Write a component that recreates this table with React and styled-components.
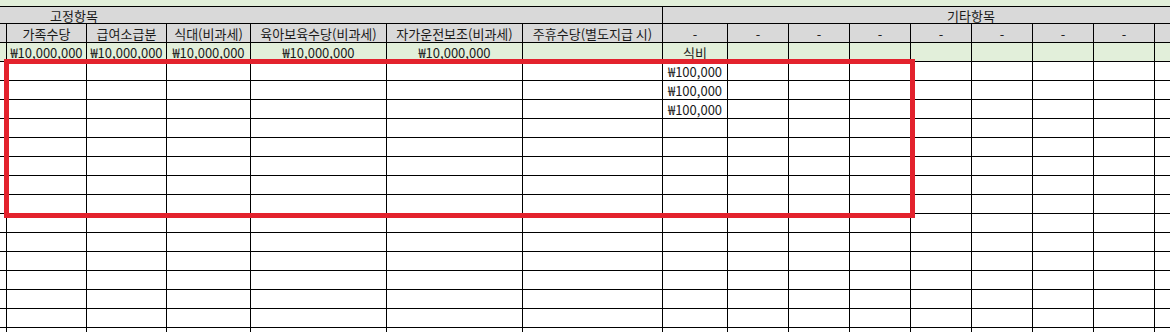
import React from 'react'
import styled, { createGlobalStyle } from 'styled-components'

const GlobalStyle = createGlobalStyle`
  html, body {
    margin: 0;
    padding: 0;
    background: #fff;
  }

  body {
    font-family: "Noto Sans CJK KR", "Noto Sans", sans-serif;
    font-size: 13px;
    color: #1a1a1a;
  }
`

const GRAY = '#d9d9d9'
const GREEN = '#e2efda'

const Sheet = styled.div`
  position: relative;
  width: 1170px;
  height: 332px;
  overflow: hidden;
`

const Grid = styled.div`
  display: grid;
  grid-template-columns: 7px 80px 80px 84px 136px 136px 140px 65px repeat(7, 61px) 1fr;
  grid-template-rows: 7px 17px 19px 19px;
  grid-auto-rows: 19px;
`

const Cell = styled.div`
  box-sizing: border-box;
  display: flex;
  align-items: center;
  justify-content: ${p => (p.$align === 'left' ? 'flex-start' : 'center')};
  padding-left: ${p => p.$indent || 0}px;
  grid-column: ${p => p.$span || 'auto'};
  background: ${p => p.$bg || '#fff'};
  border-bottom: 1px solid #000;
  border-right: ${p => (p.$open ? 'none' : '1px solid #000')};
  white-space: nowrap;
  overflow: visible;
  line-height: 1;
`

const Highlight = styled.div`
  position: absolute;
  left: 4px;
  top: 59px;
  width: 911px;
  height: 159px;
  box-sizing: border-box;
  border: 5px solid #e3222d;
  pointer-events: none;
`

const COLS = 16

const titles = [
  '',
  '가족수당',
  '급여소급분',
  '식대(비과세)',
  '육아보육수당(비과세)',
  '자가운전보조(비과세)',
  '주휴수당(별도지급 시)',
  '-', '-', '-', '-', '-', '-', '-', '-',
  ''
]

const amounts = [
  '',
  '₩10,000,000',
  '₩10,000,000',
  '₩10,000,000',
  '₩10,000,000',
  '₩10,000,000',
  '',
  '식비',
  '', '', '', '', '', '', '', ''
]

const rows = Array.from({ length: 15 }, (_, i) => {
  const cells = Array(COLS).fill('')
  if (i < 3) cells[7] = '₩100,000'
  return cells
})

const Row = ({ cells, bg }) => (
  <>
    {cells.map((text, i) => (
      <Cell key={i} $bg={bg} $open={i === COLS - 1}>
        {text}
      </Cell>
    ))}
  </>
)

export default function App () {
  return (
    <Sheet>
      <GlobalStyle />
      <Grid>
        <Cell $span='1 / -1' $bg={GREEN} $open />

        <Cell $span='1 / 8' $bg={GRAY} $align='left' $indent={50}>고정항목</Cell>
        <Cell $span='8 / -1' $bg={GRAY} $align='left' $indent={284} $open>기타항목</Cell>

        <Row cells={titles} bg={GRAY} />
        <Row cells={amounts} bg={GREEN} />

        {rows.map((cells, i) => (
          <Row key={i} cells={cells} />
        ))}
      </Grid>
      <Highlight />
    </Sheet>
  )
}
